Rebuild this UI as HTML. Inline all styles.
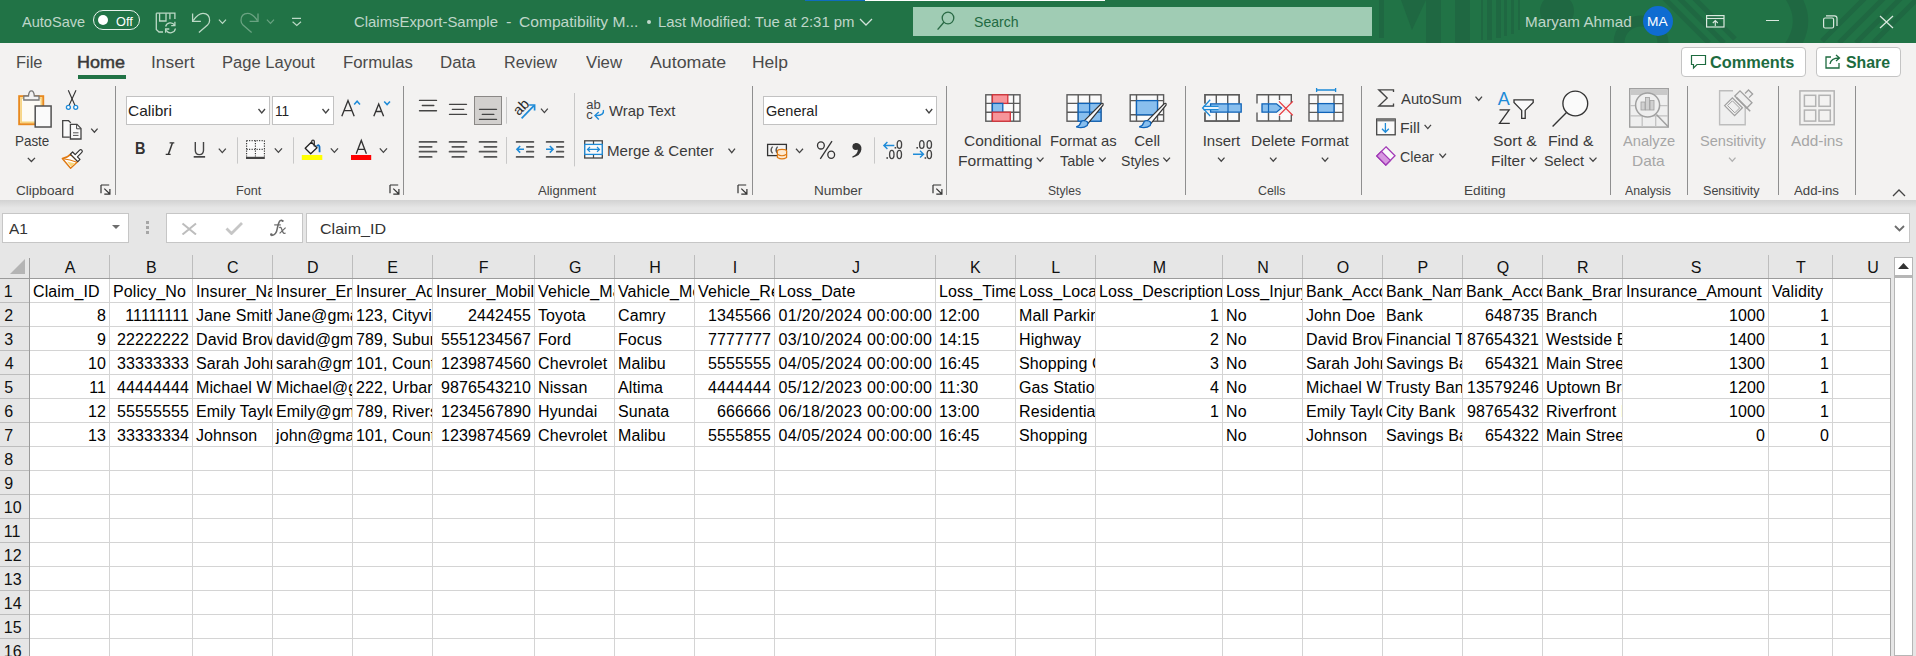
<!DOCTYPE html><html><head><meta charset="utf-8"><style>
html,body{margin:0;padding:0;}
body{width:1916px;height:656px;overflow:hidden;position:relative;background:#fff;font-family:"Liberation Sans",sans-serif;}
.t{position:absolute;white-space:pre;transform-origin:0 0;}
.c{position:absolute;height:23px;box-sizing:border-box;overflow:hidden;white-space:pre;font-size:16px;line-height:23px;color:#000;padding-top:1px;letter-spacing:0.1px}
</style></head><body>
<div style="position:absolute;left:0px;top:0px;width:1916px;height:43px;background:#217346"></div>
<div style="position:absolute;left:865px;top:0px;width:240px;height:1px;background:#fff"></div>
<svg style="position:absolute;left:1370px;top:0px;" width="546" height="43" viewBox="0 0 546 43"><g fill="#1f6842">
<rect x="9" y="0" width="5" height="38"/>
<path d="M31 0 H56 L42 30 Z"/>
<rect x="56" y="0" width="15" height="43"/>
<rect x="85" y="0" width="15" height="43"/>
<rect x="111" y="0" width="2" height="40"/><rect x="117" y="0" width="5" height="40"/><rect x="126" y="0" width="5" height="38"/><rect x="134" y="0" width="3" height="36"/><rect x="141" y="0" width="3" height="34"/><rect x="148" y="0" width="2" height="30"/>
<circle cx="187" cy="11" r="17"/>
</g>
<path d="M249 43 A 22 22 0 0 1 293 43" fill="none" stroke="#1f6842" stroke-width="11"/>
<g stroke="#1f6842" stroke-width="5">
<path d="M291 -5 L339 43 M306 -5 L354 43 M321 -5 L365 39"/>
<path d="M452 41 L497 -4 M469 43 L514 -2 M486 43 L531 -2 M503 43 L548 -2"/>
</g>
<path d="M418 -10 Q 443 21 418 52" fill="none" stroke="#1f6842" stroke-width="15"/>
</svg>
<div style="position:absolute;left:805px;top:0px;width:60px;height:1px;background:#0f6cbd"></div>
<div class="t" style="left:22.20px;top:13.5px;font-size:15px;line-height:15px;color:rgba(255,255,255,0.72);transform:scaleX(0.9713);">AutoSave</div>
<div style="position:absolute;left:93px;top:10px;width:45px;height:18px;border:1px solid #e8f1ec;border-radius:10px"></div>
<div style="position:absolute;left:98px;top:15px;width:10px;height:10px;border-radius:50%;background:#fff"></div>
<div class="t" style="left:116.03px;top:15px;font-size:13px;line-height:13px;color:#fff;transform:scaleX(0.9774);">Off</div>
<svg style="position:absolute;left:150px;top:8px;" width="160" height="30" viewBox="0 0 160 30"><path d="M6.3 5.2 H24.9 V11 M6.3 5.2 V21.5 L9 24 H13" fill="none" stroke="#bcd9c6" stroke-width="1.3"/>
<path d="M9.6 5.2 V13 H16 V5.2" fill="none" stroke="#bcd9c6" stroke-width="1.3"/><path d="M19.9 5.2 V11.3" stroke="#bcd9c6" stroke-width="1.3"/>
<path d="M15.6 18.5 A5 5 0 0 1 24.6 17.2 M25.4 20.5 A5 5 0 0 1 16.2 22.4" fill="none" stroke="#bcd9c6" stroke-width="1.3"/>
<path d="M24.9 13.8 V17.6 H21.2 M15.6 24.8 V21 H19.3" fill="none" stroke="#bcd9c6" stroke-width="1.3"/>
<path d="M42.6 5.4 V13.4 H50.9" fill="none" stroke="#bcd9c6" stroke-width="1.3"/>
<path d="M43.2 12.6 Q48 5.3 53 5.3 Q59.6 5.3 59.6 12.5 Q59.6 15 57.5 17 L48.9 24.6" fill="none" stroke="#bcd9c6" stroke-width="1.3"/>
<path d="M68.9 11.7 L72.5 15.4 L76 11.7" fill="none" stroke="#bcd9c6" stroke-width="1.2"/>
<path d="M108 5.4 V13.4 H99.6" fill="none" stroke="#6aa382" stroke-width="1.3"/>
<path d="M107.4 12.6 Q102.6 5.3 97.6 5.3 Q91 5.3 91 12.5 Q91 15 93 17 L101.6 24.6" fill="none" stroke="#6aa382" stroke-width="1.3"/>
<path d="M116.9 11.7 L120.5 15.4 L124 11.7" fill="none" stroke="#6aa382" stroke-width="1.2"/>
<path d="M142 10.4 H151 M142.6 13.8 L146.8 17.5 L151 13.8" fill="none" stroke="#bcd9c6" stroke-width="1.2"/>
</svg>
<div class="t" style="left:354.16px;top:13.899999999999999px;font-size:15px;line-height:15px;color:rgba(255,255,255,0.72);transform:scaleX(0.9922);">ClaimsExport-Sample</div>
<div class="t" style="left:505.97px;top:13.899999999999999px;font-size:15px;line-height:15px;color:rgba(255,255,255,0.72);transform:scaleX(1.0884);">-</div>
<div class="t" style="left:519.22px;top:13.899999999999999px;font-size:15px;line-height:15px;color:rgba(255,255,255,0.72);transform:scaleX(1.0383);">Compatibility M...</div>
<div style="position:absolute;left:647px;top:20px;width:4px;height:4px;border-radius:50%;background:rgba(255,255,255,0.72)"></div>
<div class="t" style="left:657.51px;top:13.899999999999999px;font-size:15px;line-height:15px;color:rgba(255,255,255,0.72);transform:scaleX(0.9946);">Last Modified: Tue at 2:31 pm</div>
<svg style="position:absolute;left:859px;top:18px;" width="14" height="8" viewBox="0 0 14 8"><path d="M1 1 L7 7 L13 1" fill="none" stroke="rgba(255,255,255,0.8)" stroke-width="1.3"/></svg>
<div style="position:absolute;left:913px;top:7px;width:459px;height:29px;background:#a0ccb4"></div>
<svg style="position:absolute;left:936px;top:10px;" width="20" height="22" viewBox="0 0 20 22"><circle cx="12" cy="8" r="5.8" fill="none" stroke="#2a6a45" stroke-width="1.3"/><path d="M7.9 12.3 L1.6 19.6" stroke="#2a6a45" stroke-width="1.4"/></svg>
<div class="t" style="left:973.87px;top:14.399999999999999px;font-size:15px;line-height:15px;color:#1f6a42;transform:scaleX(0.9384);">Search</div>
<div class="t" style="left:1525.38px;top:14px;font-size:15px;line-height:15px;color:rgba(255,255,255,0.72);transform:scaleX(1.0153);">Maryam Ahmad</div>
<div style="position:absolute;left:1643px;top:6px;width:30px;height:30px;border-radius:50%;background:#0f6cd1"></div>
<div class="t" style="left:1647.40px;top:15px;font-size:13px;line-height:13px;color:#fff;transform:scaleX(1.0563);">MA</div>
<svg style="position:absolute;left:1706px;top:15px;" width="19" height="13" viewBox="0 0 19 13"><rect x="0.6" y="0.6" width="17.4" height="11.4" fill="none" stroke="#d9e8de" stroke-width="1.2"/><path d="M0.6 3.5 H18" stroke="#d9e8de" stroke-width="1.1"/><path d="M9.3 11 V5.5 M6.8 8 L9.3 5.5 L11.8 8" fill="none" stroke="#d9e8de" stroke-width="1.1"/></svg>
<div style="position:absolute;left:1766px;top:20px;width:13px;height:1.3px;background:#d9e8de"></div>
<svg style="position:absolute;left:1823px;top:15px;" width="15" height="14" viewBox="0 0 15 14"><rect x="0.6" y="3" width="10" height="10" rx="1.5" fill="none" stroke="#d9e8de" stroke-width="1.2"/><path d="M3 0.8 H11.5 Q14 0.8 14 3.3 V11" fill="none" stroke="#d9e8de" stroke-width="1.2"/></svg>
<svg style="position:absolute;left:1879px;top:15px;" width="15" height="14" viewBox="0 0 15 14"><path d="M1 1 L14 13 M14 1 L1 13" stroke="#d9e8de" stroke-width="1.3"/></svg>
<div style="position:absolute;left:0px;top:43px;width:1916px;height:157px;background:#f3f2f1"></div>
<div class="t" style="left:16.09px;top:54.7px;font-size:16px;line-height:16px;color:#4a4a4a;transform:scaleX(1.0269);">File</div>
<div class="t" style="left:150.94px;top:54.7px;font-size:16px;line-height:16px;color:#4a4a4a;transform:scaleX(1.0863);">Insert</div>
<div class="t" style="left:222.18px;top:54.7px;font-size:16px;line-height:16px;color:#4a4a4a;transform:scaleX(1.0341);">Page Layout</div>
<div class="t" style="left:343.26px;top:54.7px;font-size:16px;line-height:16px;color:#4a4a4a;transform:scaleX(1.0481);">Formulas</div>
<div class="t" style="left:440.25px;top:54.7px;font-size:16px;line-height:16px;color:#4a4a4a;transform:scaleX(1.0530);">Data</div>
<div class="t" style="left:504.01px;top:54.7px;font-size:16px;line-height:16px;color:#4a4a4a;transform:scaleX(1.0078);">Review</div>
<div class="t" style="left:585.92px;top:54.7px;font-size:16px;line-height:16px;color:#4a4a4a;transform:scaleX(1.0490);">View</div>
<div class="t" style="left:650.20px;top:54.7px;font-size:16px;line-height:16px;color:#4a4a4a;transform:scaleX(1.1113);">Automate</div>
<div class="t" style="left:752.20px;top:54.7px;font-size:16px;line-height:16px;color:#4a4a4a;transform:scaleX(1.0917);">Help</div>
<div class="t" style="left:77.26px;top:54.7px;font-size:16px;line-height:16px;color:#3a3a3a;transform:scaleX(1.1245);-webkit-text-stroke:0.45px #3a3a3a;">Home</div>
<div style="position:absolute;left:78px;top:75px;width:48px;height:4px;background:#217346"></div>
<div style="position:absolute;left:1681px;top:47px;width:125px;height:30px;box-sizing:border-box;border:1px solid #c4c4c4;border-radius:4px;background:#fff"></div>
<div style="position:absolute;left:1816px;top:47px;width:85px;height:30px;box-sizing:border-box;border:1px solid #c4c4c4;border-radius:4px;background:#fff"></div>
<div class="t" style="left:1710.35px;top:55px;font-size:16px;line-height:16px;color:#1d6b3f;font-weight:bold;transform:scaleX(1.0202);">Comments</div>
<div class="t" style="left:1845.52px;top:55px;font-size:16px;line-height:16px;color:#1d6b3f;font-weight:bold;transform:scaleX(0.9899);">Share</div>
<svg style="position:absolute;left:1690px;top:54px;" width="17" height="16" viewBox="0 0 17 16"><path d="M1.5 1.5 H15.5 V10.5 H7 L3.5 14 V10.5 H1.5 Z" fill="none" stroke="#1d6b3f" stroke-width="1.2"/></svg>
<svg style="position:absolute;left:1824px;top:52px;" width="18" height="18" viewBox="0 0 18 18"><path d="M7 5 H2 V16 H15 V11" fill="none" stroke="#1d6b3f" stroke-width="1.3"/><path d="M6 12 Q7 6 15 6 M12 3 L15.5 6 L12 9" fill="none" stroke="#1d6b3f" stroke-width="1.3"/></svg>
<div style="position:absolute;left:115px;top:86px;width:1px;height:109px;background:#8f8f8f"></div>
<div style="position:absolute;left:403px;top:86px;width:1px;height:109px;background:#8f8f8f"></div>
<div style="position:absolute;left:752px;top:86px;width:1px;height:109px;background:#8f8f8f"></div>
<div style="position:absolute;left:946px;top:86px;width:1px;height:109px;background:#8f8f8f"></div>
<div style="position:absolute;left:1185px;top:86px;width:1px;height:109px;background:#8f8f8f"></div>
<div style="position:absolute;left:1361px;top:86px;width:1px;height:109px;background:#8f8f8f"></div>
<div style="position:absolute;left:1610px;top:86px;width:1px;height:109px;background:#8f8f8f"></div>
<div style="position:absolute;left:1687px;top:86px;width:1px;height:109px;background:#8f8f8f"></div>
<div style="position:absolute;left:1778px;top:86px;width:1px;height:109px;background:#8f8f8f"></div>
<div style="position:absolute;left:1855px;top:86px;width:1px;height:109px;background:#8f8f8f"></div>
<div class="t" style="left:15.82px;top:183.5px;font-size:13px;line-height:13px;color:#444;transform:scaleX(1.0435);">Clipboard</div>
<div class="t" style="left:235.59px;top:183.5px;font-size:13px;line-height:13px;color:#444;transform:scaleX(0.9721);">Font</div>
<div class="t" style="left:538.00px;top:183.5px;font-size:13px;line-height:13px;color:#444;transform:scaleX(1.0049);">Alignment</div>
<div class="t" style="left:814.41px;top:183.5px;font-size:13px;line-height:13px;color:#444;transform:scaleX(1.0449);">Number</div>
<div class="t" style="left:1048.46px;top:183.5px;font-size:13px;line-height:13px;color:#444;transform:scaleX(0.9306);">Styles</div>
<div class="t" style="left:1258.38px;top:183.5px;font-size:13px;line-height:13px;color:#444;transform:scaleX(0.9526);">Cells</div>
<div class="t" style="left:1463.91px;top:183.5px;font-size:13px;line-height:13px;color:#444;transform:scaleX(1.0468);">Editing</div>
<div class="t" style="left:1625.00px;top:183.5px;font-size:13px;line-height:13px;color:#444;transform:scaleX(0.9485);">Analysis</div>
<div class="t" style="left:1703.43px;top:183.5px;font-size:13px;line-height:13px;color:#444;transform:scaleX(0.9669);">Sensitivity</div>
<div class="t" style="left:1794.00px;top:183.5px;font-size:13px;line-height:13px;color:#444;transform:scaleX(1.0203);">Add-ins</div>
<svg style="position:absolute;left:100.2px;top:184.35px;" width="12" height="12" viewBox="0 0 12 12"><path d="M1 1 H9.2 M1 1 V9.25" stroke="#333" stroke-width="1.2"/><path d="M4.3 4.65 L9.9 10.05 M4.3 10.05 H9.9 V4.95" fill="none" stroke="#333" stroke-width="1.2"/></svg>
<svg style="position:absolute;left:388.5px;top:184.35px;" width="12" height="12" viewBox="0 0 12 12"><path d="M1 1 H9.2 M1 1 V9.25" stroke="#333" stroke-width="1.2"/><path d="M4.3 4.65 L9.9 10.05 M4.3 10.05 H9.9 V4.95" fill="none" stroke="#333" stroke-width="1.2"/></svg>
<svg style="position:absolute;left:737.1px;top:184.35px;" width="12" height="12" viewBox="0 0 12 12"><path d="M1 1 H9.2 M1 1 V9.25" stroke="#333" stroke-width="1.2"/><path d="M4.3 4.65 L9.9 10.05 M4.3 10.05 H9.9 V4.95" fill="none" stroke="#333" stroke-width="1.2"/></svg>
<svg style="position:absolute;left:931.5px;top:184.35px;" width="12" height="12" viewBox="0 0 12 12"><path d="M1 1 H9.2 M1 1 V9.25" stroke="#333" stroke-width="1.2"/><path d="M4.3 4.65 L9.9 10.05 M4.3 10.05 H9.9 V4.95" fill="none" stroke="#333" stroke-width="1.2"/></svg>
<svg style="position:absolute;left:1892px;top:188px;" width="14" height="9" viewBox="0 0 14 9"><path d="M1 8 L7 2 L13 8" fill="none" stroke="#444" stroke-width="1.3"/></svg>
<div style="position:absolute;left:0;top:200px;width:1916px;height:8px;background:linear-gradient(#d2d2d2,#e6e6e6)"></div>
<div style="position:absolute;left:0px;top:208px;width:1916px;height:48px;background:#e6e6e6"></div>
<div style="position:absolute;left:2px;top:213px;width:127px;height:30px;box-sizing:border-box;border:1px solid #c6c6c6;background:#fff"></div>
<div class="t" style="left:8.80px;top:220.8px;font-size:15px;line-height:15px;color:#333;transform:scaleX(1.0326);">A1</div>
<svg style="position:absolute;left:112px;top:225px;" width="9" height="5" viewBox="0 0 9 5"><path d="M0 0 H8 L4 4 Z" fill="#6d6d6d"/></svg>
<div style="position:absolute;left:146px;top:221px;width:3px;height:3px;background:#a6a6a6"></div>
<div style="position:absolute;left:146px;top:226px;width:3px;height:3px;background:#a6a6a6"></div>
<div style="position:absolute;left:146px;top:231px;width:3px;height:3px;background:#a6a6a6"></div>
<div style="position:absolute;left:166px;top:213px;width:137px;height:30px;box-sizing:border-box;border:1px solid #c6c6c6;background:#fff"></div>
<svg style="position:absolute;left:181px;top:222px;" width="16" height="13" viewBox="0 0 16 13"><path d="M1.5 1.5 L15 12.5 M15 1.5 L1.5 12.5" stroke="#bdbdbd" stroke-width="2"/></svg>
<svg style="position:absolute;left:225px;top:222px;" width="18" height="13" viewBox="0 0 18 13"><path d="M1.5 6.5 L6.5 11.5 L17 1" fill="none" stroke="#c6c6c6" stroke-width="2.8"/></svg>
<svg style="position:absolute;left:262px;top:212px;" width="34" height="32" viewBox="0 0 34 32"><g transform="translate(-262,-212)"><path d="M282.8 221.2 Q281.8 219.6 280.2 220.6 Q278.6 221.8 277.4 228 Q276.2 235.6 271.4 235.4" fill="none" stroke="#6a6a6a" stroke-width="1.6"/><circle cx="282.6" cy="221" r="1.1" fill="#6a6a6a"/><circle cx="271.3" cy="234.6" r="1.3" fill="#6a6a6a"/><path d="M274.2 224.9 H280.8" stroke="#6a6a6a" stroke-width="1.2"/><path d="M279.2 227.6 Q280.8 226.6 281.6 228.8 L283 232.4 Q283.8 234 285.6 233" fill="none" stroke="#6a6a6a" stroke-width="1.3"/><path d="M285.6 227.6 L279.6 233.4" stroke="#6a6a6a" stroke-width="1.2"/></g></svg>
<div style="position:absolute;left:306px;top:213px;width:1604px;height:30px;box-sizing:border-box;border:1px solid #c6c6c6;background:#fff"></div>
<div class="t" style="left:319.70px;top:220.8px;font-size:15px;line-height:15px;color:#333;transform:scaleX(1.0710);">Claim_ID</div>
<svg style="position:absolute;left:1894px;top:225px;" width="11" height="7" viewBox="0 0 11 7"><path d="M1 1 L5.5 5.5 L10 1" fill="none" stroke="#6d6d6d" stroke-width="1.8"/></svg>
<div style="position:absolute;left:0px;top:255px;width:1891px;height:23px;background:#e6e6e6"></div>
<div style="position:absolute;left:0px;top:279px;width:29px;height:377px;background:#e6e6e6"></div>
<div style="position:absolute;left:30px;top:279px;width:1860px;height:377px;background:#fff"></div>
<div style="position:absolute;left:109px;top:279px;width:1px;height:377px;background:#d4d4d4"></div>
<div style="position:absolute;left:109px;top:255px;width:1px;height:23px;background:#bdbdbd"></div>
<div style="position:absolute;left:192px;top:279px;width:1px;height:377px;background:#d4d4d4"></div>
<div style="position:absolute;left:192px;top:255px;width:1px;height:23px;background:#bdbdbd"></div>
<div style="position:absolute;left:272px;top:279px;width:1px;height:377px;background:#d4d4d4"></div>
<div style="position:absolute;left:272px;top:255px;width:1px;height:23px;background:#bdbdbd"></div>
<div style="position:absolute;left:352px;top:279px;width:1px;height:377px;background:#d4d4d4"></div>
<div style="position:absolute;left:352px;top:255px;width:1px;height:23px;background:#bdbdbd"></div>
<div style="position:absolute;left:432px;top:279px;width:1px;height:377px;background:#d4d4d4"></div>
<div style="position:absolute;left:432px;top:255px;width:1px;height:23px;background:#bdbdbd"></div>
<div style="position:absolute;left:534px;top:279px;width:1px;height:377px;background:#d4d4d4"></div>
<div style="position:absolute;left:534px;top:255px;width:1px;height:23px;background:#bdbdbd"></div>
<div style="position:absolute;left:614px;top:279px;width:1px;height:377px;background:#d4d4d4"></div>
<div style="position:absolute;left:614px;top:255px;width:1px;height:23px;background:#bdbdbd"></div>
<div style="position:absolute;left:694px;top:279px;width:1px;height:377px;background:#d4d4d4"></div>
<div style="position:absolute;left:694px;top:255px;width:1px;height:23px;background:#bdbdbd"></div>
<div style="position:absolute;left:774px;top:279px;width:1px;height:377px;background:#d4d4d4"></div>
<div style="position:absolute;left:774px;top:255px;width:1px;height:23px;background:#bdbdbd"></div>
<div style="position:absolute;left:935px;top:279px;width:1px;height:377px;background:#d4d4d4"></div>
<div style="position:absolute;left:935px;top:255px;width:1px;height:23px;background:#bdbdbd"></div>
<div style="position:absolute;left:1015px;top:279px;width:1px;height:377px;background:#d4d4d4"></div>
<div style="position:absolute;left:1015px;top:255px;width:1px;height:23px;background:#bdbdbd"></div>
<div style="position:absolute;left:1095px;top:279px;width:1px;height:377px;background:#d4d4d4"></div>
<div style="position:absolute;left:1095px;top:255px;width:1px;height:23px;background:#bdbdbd"></div>
<div style="position:absolute;left:1222px;top:279px;width:1px;height:377px;background:#d4d4d4"></div>
<div style="position:absolute;left:1222px;top:255px;width:1px;height:23px;background:#bdbdbd"></div>
<div style="position:absolute;left:1302px;top:279px;width:1px;height:377px;background:#d4d4d4"></div>
<div style="position:absolute;left:1302px;top:255px;width:1px;height:23px;background:#bdbdbd"></div>
<div style="position:absolute;left:1382px;top:279px;width:1px;height:377px;background:#d4d4d4"></div>
<div style="position:absolute;left:1382px;top:255px;width:1px;height:23px;background:#bdbdbd"></div>
<div style="position:absolute;left:1462px;top:279px;width:1px;height:377px;background:#d4d4d4"></div>
<div style="position:absolute;left:1462px;top:255px;width:1px;height:23px;background:#bdbdbd"></div>
<div style="position:absolute;left:1542px;top:279px;width:1px;height:377px;background:#d4d4d4"></div>
<div style="position:absolute;left:1542px;top:255px;width:1px;height:23px;background:#bdbdbd"></div>
<div style="position:absolute;left:1622px;top:279px;width:1px;height:377px;background:#d4d4d4"></div>
<div style="position:absolute;left:1622px;top:255px;width:1px;height:23px;background:#bdbdbd"></div>
<div style="position:absolute;left:1768px;top:279px;width:1px;height:377px;background:#d4d4d4"></div>
<div style="position:absolute;left:1768px;top:255px;width:1px;height:23px;background:#bdbdbd"></div>
<div style="position:absolute;left:1832px;top:279px;width:1px;height:377px;background:#d4d4d4"></div>
<div style="position:absolute;left:1832px;top:255px;width:1px;height:23px;background:#bdbdbd"></div>
<div style="position:absolute;left:1890px;top:279px;width:1px;height:377px;background:#a6a6a6"></div>
<div style="position:absolute;left:29px;top:258px;width:1px;height:398px;background:#9b9b9b"></div>
<div style="position:absolute;left:0px;top:278px;width:1891px;height:1px;background:#9b9b9b"></div>
<div style="position:absolute;left:30px;top:302px;width:1860px;height:1px;background:#d4d4d4"></div>
<div style="position:absolute;left:0px;top:302px;width:29px;height:1px;background:#bdbdbd"></div>
<div style="position:absolute;left:30px;top:326px;width:1860px;height:1px;background:#d4d4d4"></div>
<div style="position:absolute;left:0px;top:326px;width:29px;height:1px;background:#bdbdbd"></div>
<div style="position:absolute;left:30px;top:350px;width:1860px;height:1px;background:#d4d4d4"></div>
<div style="position:absolute;left:0px;top:350px;width:29px;height:1px;background:#bdbdbd"></div>
<div style="position:absolute;left:30px;top:374px;width:1860px;height:1px;background:#d4d4d4"></div>
<div style="position:absolute;left:0px;top:374px;width:29px;height:1px;background:#bdbdbd"></div>
<div style="position:absolute;left:30px;top:398px;width:1860px;height:1px;background:#d4d4d4"></div>
<div style="position:absolute;left:0px;top:398px;width:29px;height:1px;background:#bdbdbd"></div>
<div style="position:absolute;left:30px;top:422px;width:1860px;height:1px;background:#d4d4d4"></div>
<div style="position:absolute;left:0px;top:422px;width:29px;height:1px;background:#bdbdbd"></div>
<div style="position:absolute;left:30px;top:446px;width:1860px;height:1px;background:#d4d4d4"></div>
<div style="position:absolute;left:0px;top:446px;width:29px;height:1px;background:#bdbdbd"></div>
<div style="position:absolute;left:30px;top:470px;width:1860px;height:1px;background:#d4d4d4"></div>
<div style="position:absolute;left:0px;top:470px;width:29px;height:1px;background:#bdbdbd"></div>
<div style="position:absolute;left:30px;top:494px;width:1860px;height:1px;background:#d4d4d4"></div>
<div style="position:absolute;left:0px;top:494px;width:29px;height:1px;background:#bdbdbd"></div>
<div style="position:absolute;left:30px;top:518px;width:1860px;height:1px;background:#d4d4d4"></div>
<div style="position:absolute;left:0px;top:518px;width:29px;height:1px;background:#bdbdbd"></div>
<div style="position:absolute;left:30px;top:542px;width:1860px;height:1px;background:#d4d4d4"></div>
<div style="position:absolute;left:0px;top:542px;width:29px;height:1px;background:#bdbdbd"></div>
<div style="position:absolute;left:30px;top:566px;width:1860px;height:1px;background:#d4d4d4"></div>
<div style="position:absolute;left:0px;top:566px;width:29px;height:1px;background:#bdbdbd"></div>
<div style="position:absolute;left:30px;top:590px;width:1860px;height:1px;background:#d4d4d4"></div>
<div style="position:absolute;left:0px;top:590px;width:29px;height:1px;background:#bdbdbd"></div>
<div style="position:absolute;left:30px;top:614px;width:1860px;height:1px;background:#d4d4d4"></div>
<div style="position:absolute;left:0px;top:614px;width:29px;height:1px;background:#bdbdbd"></div>
<div style="position:absolute;left:30px;top:638px;width:1860px;height:1px;background:#d4d4d4"></div>
<div style="position:absolute;left:0px;top:638px;width:29px;height:1px;background:#bdbdbd"></div>
<div style="position:absolute;left:30px;top:662px;width:1860px;height:1px;background:#d4d4d4"></div>
<div style="position:absolute;left:0px;top:662px;width:29px;height:1px;background:#bdbdbd"></div>
<svg style="position:absolute;left:10px;top:259px;" width="16" height="16" viewBox="0 0 16 16"><path d="M15 0 V15 H0 Z" fill="#b4b4b4"/></svg>
<div class="t" style="left:64.68px;top:260px;font-size:16px;line-height:16px;color:#111;">A</div>
<div class="t" style="left:145.94px;top:260px;font-size:16px;line-height:16px;color:#111;">B</div>
<div class="t" style="left:227.12px;top:260px;font-size:16px;line-height:16px;color:#111;">C</div>
<div class="t" style="left:306.96px;top:260px;font-size:16px;line-height:16px;color:#111;">D</div>
<div class="t" style="left:387.36px;top:260px;font-size:16px;line-height:16px;color:#111;">E</div>
<div class="t" style="left:478.80px;top:260px;font-size:16px;line-height:16px;color:#111;">F</div>
<div class="t" style="left:568.96px;top:260px;font-size:16px;line-height:16px;color:#111;">G</div>
<div class="t" style="left:649.24px;top:260px;font-size:16px;line-height:16px;color:#111;">H</div>
<div class="t" style="left:732.80px;top:260px;font-size:16px;line-height:16px;color:#111;">I</div>
<div class="t" style="left:851.98px;top:260px;font-size:16px;line-height:16px;color:#111;">J</div>
<div class="t" style="left:970.12px;top:260px;font-size:16px;line-height:16px;color:#111;">K</div>
<div class="t" style="left:1051.16px;top:260px;font-size:16px;line-height:16px;color:#111;">L</div>
<div class="t" style="left:1152.86px;top:260px;font-size:16px;line-height:16px;color:#111;">M</div>
<div class="t" style="left:1257.24px;top:260px;font-size:16px;line-height:16px;color:#111;">N</div>
<div class="t" style="left:1336.80px;top:260px;font-size:16px;line-height:16px;color:#111;">O</div>
<div class="t" style="left:1417.44px;top:260px;font-size:16px;line-height:16px;color:#111;">P</div>
<div class="t" style="left:1496.80px;top:260px;font-size:16px;line-height:16px;color:#111;">Q</div>
<div class="t" style="left:1576.96px;top:260px;font-size:16px;line-height:16px;color:#111;">R</div>
<div class="t" style="left:1690.68px;top:260px;font-size:16px;line-height:16px;color:#111;">S</div>
<div class="t" style="left:1796.12px;top:260px;font-size:16px;line-height:16px;color:#111;">T</div>
<div class="t" style="left:1867.24px;top:260px;font-size:16px;line-height:16px;color:#111;">U</div>
<div class="t" style="left:3.80px;top:284px;font-size:16px;line-height:16px;color:#111;">1</div>
<div class="t" style="left:4.20px;top:308px;font-size:16px;line-height:16px;color:#111;">2</div>
<div class="t" style="left:4.36px;top:332px;font-size:16px;line-height:16px;color:#111;">3</div>
<div class="t" style="left:4.68px;top:356px;font-size:16px;line-height:16px;color:#111;">4</div>
<div class="t" style="left:4.36px;top:380px;font-size:16px;line-height:16px;color:#111;">5</div>
<div class="t" style="left:4.20px;top:404px;font-size:16px;line-height:16px;color:#111;">6</div>
<div class="t" style="left:4.20px;top:428px;font-size:16px;line-height:16px;color:#111;">7</div>
<div class="t" style="left:4.28px;top:452px;font-size:16px;line-height:16px;color:#111;">8</div>
<div class="t" style="left:4.28px;top:476px;font-size:16px;line-height:16px;color:#111;">9</div>
<div class="t" style="left:3.80px;top:500px;font-size:16px;line-height:16px;color:#111;">10</div>
<div class="t" style="left:3.80px;top:524px;font-size:16px;line-height:16px;color:#111;">11</div>
<div class="t" style="left:3.80px;top:548px;font-size:16px;line-height:16px;color:#111;">12</div>
<div class="t" style="left:3.80px;top:572px;font-size:16px;line-height:16px;color:#111;">13</div>
<div class="t" style="left:3.80px;top:596px;font-size:16px;line-height:16px;color:#111;">14</div>
<div class="t" style="left:3.80px;top:620px;font-size:16px;line-height:16px;color:#111;">15</div>
<div class="t" style="left:3.80px;top:644px;font-size:16px;line-height:16px;color:#111;">16</div>
<div style="position:absolute;left:1891px;top:255px;width:25px;height:401px;background:#e6e6e6"></div>
<div style="position:absolute;left:1894px;top:257px;width:19px;height:19px;box-sizing:border-box;border:1px solid #b6b6b6;background:#fff"></div>
<svg style="position:absolute;left:1898px;top:263px;" width="11" height="6" viewBox="0 0 11 6"><path d="M0 6 L5.5 0 L11 6 Z" fill="#333"/></svg>
<div style="position:absolute;left:1894px;top:276px;width:19px;height:380px;box-sizing:border-box;border:1px solid #b6b6b6;border-top:2px solid #b6b6b6;background:#fff"></div>
<div class="c" style="left:30px;top:279px;width:79px;padding-left:3px;">Claim_ID</div>
<div class="c" style="left:110px;top:279px;width:82px;padding-left:3px;">Policy_No</div>
<div class="c" style="left:193px;top:279px;width:79px;padding-left:3px;">Insurer_Name</div>
<div class="c" style="left:273px;top:279px;width:79px;padding-left:3px;">Insurer_Email</div>
<div class="c" style="left:353px;top:279px;width:79px;padding-left:3px;">Insurer_Address</div>
<div class="c" style="left:433px;top:279px;width:101px;padding-left:3px;">Insurer_Mobile</div>
<div class="c" style="left:535px;top:279px;width:79px;padding-left:3px;">Vehicle_Make</div>
<div class="c" style="left:615px;top:279px;width:79px;padding-left:3px;">Vahicle_Model</div>
<div class="c" style="left:695px;top:279px;width:79px;padding-left:3px;">Vehicle_Reg</div>
<div class="c" style="left:775px;top:279px;width:160px;padding-left:3px;">Loss_Date</div>
<div class="c" style="left:936px;top:279px;width:79px;padding-left:3px;">Loss_Time</div>
<div class="c" style="left:1016px;top:279px;width:79px;padding-left:3px;">Loss_Location</div>
<div class="c" style="left:1096px;top:279px;width:126px;padding-left:3px;">Loss_Description</div>
<div class="c" style="left:1223px;top:279px;width:79px;padding-left:3px;">Loss_Injury</div>
<div class="c" style="left:1303px;top:279px;width:79px;padding-left:3px;">Bank_Account_Name</div>
<div class="c" style="left:1383px;top:279px;width:79px;padding-left:3px;">Bank_Name</div>
<div class="c" style="left:1463px;top:279px;width:79px;padding-left:3px;">Bank_Account_No</div>
<div class="c" style="left:1543px;top:279px;width:79px;padding-left:3px;">Bank_Branch</div>
<div class="c" style="left:1623px;top:279px;width:145px;padding-left:3px;">Insurance_Amount</div>
<div class="c" style="left:1769px;top:279px;width:63px;padding-left:3px;">Validity</div>
<div class="c" style="left:30px;top:303px;width:79px;text-align:right;padding-right:3px;">8</div>
<div class="c" style="left:110px;top:303px;width:82px;text-align:right;padding-right:3px;">11111111</div>
<div class="c" style="left:193px;top:303px;width:79px;padding-left:3px;">Jane Smith</div>
<div class="c" style="left:273px;top:303px;width:79px;padding-left:3px;">Jane@gmail.com</div>
<div class="c" style="left:353px;top:303px;width:79px;padding-left:3px;">123, Cityview</div>
<div class="c" style="left:433px;top:303px;width:101px;text-align:right;padding-right:3px;">2442455</div>
<div class="c" style="left:535px;top:303px;width:79px;padding-left:3px;">Toyota</div>
<div class="c" style="left:615px;top:303px;width:79px;padding-left:3px;">Camry</div>
<div class="c" style="left:695px;top:303px;width:79px;text-align:right;padding-right:3px;">1345566</div>
<div class="c" style="left:775px;top:303px;width:160px;text-align:right;padding-right:2.6px;letter-spacing:0.38px;">01/20/2024 00:00:00</div>
<div class="c" style="left:936px;top:303px;width:79px;padding-left:3px;">12:00</div>
<div class="c" style="left:1016px;top:303px;width:79px;padding-left:3px;">Mall Parking</div>
<div class="c" style="left:1096px;top:303px;width:126px;text-align:right;padding-right:3px;">1</div>
<div class="c" style="left:1223px;top:303px;width:79px;padding-left:3px;">No</div>
<div class="c" style="left:1303px;top:303px;width:79px;padding-left:3px;">John Doe</div>
<div class="c" style="left:1383px;top:303px;width:79px;padding-left:3px;">Bank</div>
<div class="c" style="left:1463px;top:303px;width:79px;text-align:right;padding-right:3px;">648735</div>
<div class="c" style="left:1543px;top:303px;width:79px;padding-left:3px;">Branch</div>
<div class="c" style="left:1623px;top:303px;width:145px;text-align:right;padding-right:3px;">1000</div>
<div class="c" style="left:1769px;top:303px;width:63px;text-align:right;padding-right:3px;">1</div>
<div class="c" style="left:30px;top:327px;width:79px;text-align:right;padding-right:3px;">9</div>
<div class="c" style="left:110px;top:327px;width:82px;text-align:right;padding-right:3px;">22222222</div>
<div class="c" style="left:193px;top:327px;width:79px;padding-left:3px;">David Brown</div>
<div class="c" style="left:273px;top:327px;width:79px;padding-left:3px;">david@gmail.com</div>
<div class="c" style="left:353px;top:327px;width:79px;padding-left:3px;">789, Suburb</div>
<div class="c" style="left:433px;top:327px;width:101px;text-align:right;padding-right:3px;">5551234567</div>
<div class="c" style="left:535px;top:327px;width:79px;padding-left:3px;">Ford</div>
<div class="c" style="left:615px;top:327px;width:79px;padding-left:3px;">Focus</div>
<div class="c" style="left:695px;top:327px;width:79px;text-align:right;padding-right:3px;">7777777</div>
<div class="c" style="left:775px;top:327px;width:160px;text-align:right;padding-right:2.6px;letter-spacing:0.38px;">03/10/2024 00:00:00</div>
<div class="c" style="left:936px;top:327px;width:79px;padding-left:3px;">14:15</div>
<div class="c" style="left:1016px;top:327px;width:79px;padding-left:3px;">Highway</div>
<div class="c" style="left:1096px;top:327px;width:126px;text-align:right;padding-right:3px;">2</div>
<div class="c" style="left:1223px;top:327px;width:79px;padding-left:3px;">No</div>
<div class="c" style="left:1303px;top:327px;width:79px;padding-left:3px;">David Brown</div>
<div class="c" style="left:1383px;top:327px;width:79px;padding-left:3px;">Financial Trust</div>
<div class="c" style="left:1463px;top:327px;width:79px;text-align:right;padding-right:3px;">87654321</div>
<div class="c" style="left:1543px;top:327px;width:79px;padding-left:3px;">Westside Branch</div>
<div class="c" style="left:1623px;top:327px;width:145px;text-align:right;padding-right:3px;">1400</div>
<div class="c" style="left:1769px;top:327px;width:63px;text-align:right;padding-right:3px;">1</div>
<div class="c" style="left:30px;top:351px;width:79px;text-align:right;padding-right:3px;">10</div>
<div class="c" style="left:110px;top:351px;width:82px;text-align:right;padding-right:3px;">33333333</div>
<div class="c" style="left:193px;top:351px;width:79px;padding-left:3px;">Sarah Johnson</div>
<div class="c" style="left:273px;top:351px;width:79px;padding-left:3px;">sarah@gmail.com</div>
<div class="c" style="left:353px;top:351px;width:79px;padding-left:3px;">101, County</div>
<div class="c" style="left:433px;top:351px;width:101px;text-align:right;padding-right:3px;">1239874560</div>
<div class="c" style="left:535px;top:351px;width:79px;padding-left:3px;">Chevrolet</div>
<div class="c" style="left:615px;top:351px;width:79px;padding-left:3px;">Malibu</div>
<div class="c" style="left:695px;top:351px;width:79px;text-align:right;padding-right:3px;">5555555</div>
<div class="c" style="left:775px;top:351px;width:160px;text-align:right;padding-right:2.6px;letter-spacing:0.38px;">04/05/2024 00:00:00</div>
<div class="c" style="left:936px;top:351px;width:79px;padding-left:3px;">16:45</div>
<div class="c" style="left:1016px;top:351px;width:79px;padding-left:3px;">Shopping Center</div>
<div class="c" style="left:1096px;top:351px;width:126px;text-align:right;padding-right:3px;">3</div>
<div class="c" style="left:1223px;top:351px;width:79px;padding-left:3px;">No</div>
<div class="c" style="left:1303px;top:351px;width:79px;padding-left:3px;">Sarah Johnson</div>
<div class="c" style="left:1383px;top:351px;width:79px;padding-left:3px;">Savings Bank</div>
<div class="c" style="left:1463px;top:351px;width:79px;text-align:right;padding-right:3px;">654321</div>
<div class="c" style="left:1543px;top:351px;width:79px;padding-left:3px;">Main Street</div>
<div class="c" style="left:1623px;top:351px;width:145px;text-align:right;padding-right:3px;">1300</div>
<div class="c" style="left:1769px;top:351px;width:63px;text-align:right;padding-right:3px;">1</div>
<div class="c" style="left:30px;top:375px;width:79px;text-align:right;padding-right:3px;">11</div>
<div class="c" style="left:110px;top:375px;width:82px;text-align:right;padding-right:3px;">44444444</div>
<div class="c" style="left:193px;top:375px;width:79px;padding-left:3px;">Michael Wilson</div>
<div class="c" style="left:273px;top:375px;width:79px;padding-left:3px;">Michael@gmail.com</div>
<div class="c" style="left:353px;top:375px;width:79px;padding-left:3px;">222, Urban</div>
<div class="c" style="left:433px;top:375px;width:101px;text-align:right;padding-right:3px;">9876543210</div>
<div class="c" style="left:535px;top:375px;width:79px;padding-left:3px;">Nissan</div>
<div class="c" style="left:615px;top:375px;width:79px;padding-left:3px;">Altima</div>
<div class="c" style="left:695px;top:375px;width:79px;text-align:right;padding-right:3px;">4444444</div>
<div class="c" style="left:775px;top:375px;width:160px;text-align:right;padding-right:2.6px;letter-spacing:0.38px;">05/12/2023 00:00:00</div>
<div class="c" style="left:936px;top:375px;width:79px;padding-left:3px;">11:30</div>
<div class="c" style="left:1016px;top:375px;width:79px;padding-left:3px;">Gas Station</div>
<div class="c" style="left:1096px;top:375px;width:126px;text-align:right;padding-right:3px;">4</div>
<div class="c" style="left:1223px;top:375px;width:79px;padding-left:3px;">No</div>
<div class="c" style="left:1303px;top:375px;width:79px;padding-left:3px;">Michael Wilson</div>
<div class="c" style="left:1383px;top:375px;width:79px;padding-left:3px;">Trusty Bank</div>
<div class="c" style="left:1463px;top:375px;width:79px;text-align:right;padding-right:3px;">13579246</div>
<div class="c" style="left:1543px;top:375px;width:79px;padding-left:3px;">Uptown Branch</div>
<div class="c" style="left:1623px;top:375px;width:145px;text-align:right;padding-right:3px;">1200</div>
<div class="c" style="left:1769px;top:375px;width:63px;text-align:right;padding-right:3px;">1</div>
<div class="c" style="left:30px;top:399px;width:79px;text-align:right;padding-right:3px;">12</div>
<div class="c" style="left:110px;top:399px;width:82px;text-align:right;padding-right:3px;">55555555</div>
<div class="c" style="left:193px;top:399px;width:79px;padding-left:3px;">Emily Taylor</div>
<div class="c" style="left:273px;top:399px;width:79px;padding-left:3px;">Emily@gmail.com</div>
<div class="c" style="left:353px;top:399px;width:79px;padding-left:3px;">789, Riverside</div>
<div class="c" style="left:433px;top:399px;width:101px;text-align:right;padding-right:3px;">1234567890</div>
<div class="c" style="left:535px;top:399px;width:79px;padding-left:3px;">Hyundai</div>
<div class="c" style="left:615px;top:399px;width:79px;padding-left:3px;">Sunata</div>
<div class="c" style="left:695px;top:399px;width:79px;text-align:right;padding-right:3px;">666666</div>
<div class="c" style="left:775px;top:399px;width:160px;text-align:right;padding-right:2.6px;letter-spacing:0.38px;">06/18/2023 00:00:00</div>
<div class="c" style="left:936px;top:399px;width:79px;padding-left:3px;">13:00</div>
<div class="c" style="left:1016px;top:399px;width:79px;padding-left:3px;">Residential</div>
<div class="c" style="left:1096px;top:399px;width:126px;text-align:right;padding-right:3px;">1</div>
<div class="c" style="left:1223px;top:399px;width:79px;padding-left:3px;">No</div>
<div class="c" style="left:1303px;top:399px;width:79px;padding-left:3px;">Emily Taylor</div>
<div class="c" style="left:1383px;top:399px;width:79px;padding-left:3px;">City Bank</div>
<div class="c" style="left:1463px;top:399px;width:79px;text-align:right;padding-right:3px;">98765432</div>
<div class="c" style="left:1543px;top:399px;width:79px;padding-left:3px;">Riverfront Branch</div>
<div class="c" style="left:1623px;top:399px;width:145px;text-align:right;padding-right:3px;">1000</div>
<div class="c" style="left:1769px;top:399px;width:63px;text-align:right;padding-right:3px;">1</div>
<div class="c" style="left:30px;top:423px;width:79px;text-align:right;padding-right:3px;">13</div>
<div class="c" style="left:110px;top:423px;width:82px;text-align:right;padding-right:3px;">33333334</div>
<div class="c" style="left:193px;top:423px;width:79px;padding-left:3px;">Johnson</div>
<div class="c" style="left:273px;top:423px;width:79px;padding-left:3px;">john@gmail.com</div>
<div class="c" style="left:353px;top:423px;width:79px;padding-left:3px;">101, County</div>
<div class="c" style="left:433px;top:423px;width:101px;text-align:right;padding-right:3px;">1239874569</div>
<div class="c" style="left:535px;top:423px;width:79px;padding-left:3px;">Chevrolet</div>
<div class="c" style="left:615px;top:423px;width:79px;padding-left:3px;">Malibu</div>
<div class="c" style="left:695px;top:423px;width:79px;text-align:right;padding-right:3px;">5555855</div>
<div class="c" style="left:775px;top:423px;width:160px;text-align:right;padding-right:2.6px;letter-spacing:0.38px;">04/05/2024 00:00:00</div>
<div class="c" style="left:936px;top:423px;width:79px;padding-left:3px;">16:45</div>
<div class="c" style="left:1016px;top:423px;width:79px;padding-left:3px;">Shopping</div>
<div class="c" style="left:1223px;top:423px;width:79px;padding-left:3px;">No</div>
<div class="c" style="left:1303px;top:423px;width:79px;padding-left:3px;">Johnson</div>
<div class="c" style="left:1383px;top:423px;width:79px;padding-left:3px;">Savings Bank</div>
<div class="c" style="left:1463px;top:423px;width:79px;text-align:right;padding-right:3px;">654322</div>
<div class="c" style="left:1543px;top:423px;width:79px;padding-left:3px;">Main Street</div>
<div class="c" style="left:1623px;top:423px;width:145px;text-align:right;padding-right:3px;">0</div>
<div class="c" style="left:1769px;top:423px;width:63px;text-align:right;padding-right:3px;">0</div>
<div class="t" style="left:513px;top:99.5px;font-size:14.5px;line-height:14.5px;color:#2a2a2a;transform:rotate(-45deg);transform-origin:50% 50%">ab</div>
<div class="t" style="left:586.2px;top:98px;font-size:13px;line-height:13px;color:#444">ab</div>
<div class="t" style="left:586.2px;top:107.5px;font-size:13px;line-height:13px;color:#444">c</div>
<div class="t" style="left:1497.8px;top:90px;font-size:18px;line-height:18px;color:#1e8bd8">A</div>
<svg style="position:absolute;left:0;top:0" width="1916" height="200" viewBox="0 0 1916 200"><rect x="19.2" y="96.2" width="24" height="28" fill="#fdfbf5" stroke="#e8891f" stroke-width="2"/><rect x="21.1" y="98.1" width="20.2" height="24.2" fill="none" stroke="#f7d27a" stroke-width="1.6"/><path d="M23.8 100 V96 H28.5 Q28.8 90.8 31.4 90.8 Q34 90.8 34.3 96 H39 V100 Z" fill="#f2f2f2" stroke="#777" stroke-width="1.3"/><rect x="35.2" y="106" width="15.9" height="21" fill="#fafafa" stroke="#505050" stroke-width="1.5"/><path d="M68.3 90.3 L75 105.5" stroke="#333" stroke-width="1.1" stroke-linecap="butt" fill="none"/><path d="M76 90.3 L69 105.5" stroke="#333" stroke-width="1.1" stroke-linecap="butt" fill="none"/><circle cx="68.4" cy="107.3" r="2" fill="#fff" stroke="#1e8bd8" stroke-width="1.3"/><circle cx="75.7" cy="107.3" r="2" fill="#fff" stroke="#1e8bd8" stroke-width="1.3"/><path d="M69.8 137.2 H62.7 V120.7 H68.6 L70.8 122.9" fill="#fafafa" stroke="#444" stroke-width="1.3"/><path d="M70.4 124.4 H77 L81 128.4 V139 H70.4 Z" fill="#fafafa" stroke="#444" stroke-width="1.3"/><path d="M76.6 124.4 V128.8 H81" fill="none" stroke="#444" stroke-width="1"/><path d="M73 132.8 L78.5 132.8" stroke="#555" stroke-width="1" stroke-linecap="butt" fill="none"/><path d="M73 135.4 L78.5 135.4" stroke="#555" stroke-width="1" stroke-linecap="butt" fill="none"/><path d="M91.2 128.6 L94.4 132.2 L97.6 128.6" fill="none" stroke="#444" stroke-width="1.3"/><path d="M62.3 158.5 Q67.5 157.6 70.4 154.2 L77.8 161.6 L70.6 168.3 Z" fill="#fff" stroke="#e07a12" stroke-width="1.4" stroke-linejoin="round"/><path d="M67 161.6 L75.4 163.4 L70.8 166.6 Z" fill="#fbd77b"/><path d="M63 158.8 Q70 159.4 77 162.2" fill="none" stroke="#e07a12" stroke-width="1.1"/><path d="M70.4 154.2 L72.6 152.0 L75.2 154.6 L79.6 150.2 Q80.7 149.1 81.8 150.2 Q82.9 151.3 81.8 152.4 L77.4 156.8 L80.0 159.4 L77.8 161.6 Z" fill="#fff" stroke="#333" stroke-width="1.2" stroke-linejoin="round"/><path d="M27.8 157.9 L31.4 161.5 L35 157.9" fill="none" stroke="#444" stroke-width="1.3"/><rect x="126.5" y="96.5" width="143" height="28" fill="#fff" stroke="#c2c2c2" stroke-width="1"/><rect x="272.5" y="96.5" width="61" height="28" fill="#fff" stroke="#c2c2c2" stroke-width="1"/><path d="M258.5 109 L261.75 113 L265 109" fill="none" stroke="#444" stroke-width="1.3"/><path d="M322.5 109 L325.75 113 L329 109" fill="none" stroke="#444" stroke-width="1.3"/><path d="M341.8 116.2 L348 100.6 L354.2 116.2 M344 110.6 H352" fill="none" stroke="#333" stroke-width="1.35"/><path d="M354.2 104.4 L357.1 101.2 L360 104.4" fill="none" stroke="#1e8bd8" stroke-width="1.5"/><path d="M373.8 116.2 L378.7 104 L383.6 116.2 M375.6 111.5 H381.8" fill="none" stroke="#333" stroke-width="1.35"/><path d="M384.2 101.4 L387.1 104.6 L390 101.4" fill="none" stroke="#1e8bd8" stroke-width="1.5"/><rect x="193.7" y="156" width="11.4" height="1.7" fill="#444"/><path d="M195.3 142 V150.2 Q195.3 154.6 199.4 154.6 Q203.5 154.6 203.5 150.2 V142" fill="none" stroke="#444" stroke-width="1.4"/><path d="M218.8 148.6 L222.3 152.6 L225.8 148.6" fill="none" stroke="#444" stroke-width="1.3"/><path d="M237.5 137.3 L237.5 163.6" stroke="#c8c8c8" stroke-width="1" stroke-linecap="butt" fill="none"/><path d="M293.5 137.3 L293.5 163.6" stroke="#c8c8c8" stroke-width="1" stroke-linecap="butt" fill="none"/><rect x="246.8" y="140.8" width="17.4" height="16" fill="#fafafa"/><path d="M246.6 140.6 H264.4 M246.6 140.6 V156.5 M264.4 140.6 V156.5 M255.4 140.6 V156.5 M246.6 149.4 H264.4" fill="none" stroke="#333" stroke-width="1.1" stroke-dasharray="1.1 1.4"/><rect x="246" y="156.8" width="18.8" height="2.2" fill="#444"/><path d="M274.8 148.4 L278.4 152.4 L282 148.4" fill="none" stroke="#444" stroke-width="1.3"/><path d="M305.2 148.3 L311.3 142.3 L317 147.7 L310.7 153.8 Z" fill="#fafafa" stroke="#222" stroke-width="1.3" stroke-linejoin="round"/><path d="M311.7 142.5 V141.5 Q311.7 140.1 313 140.1 Q314.3 140.1 314.3 141.5 V146.6" fill="none" stroke="#333" stroke-width="1.3"/><path d="M316.8 146.2 Q318.6 143.6 319.5 146.8 L319.6 152.3" fill="none" stroke="#0f6cbd" stroke-width="1.8"/><rect x="301.8" y="155" width="20.5" height="5" fill="#ffff00"/><path d="M330.8 148.4 L334.4 152.4 L338 148.4" fill="none" stroke="#444" stroke-width="1.3"/><path d="M356.2 153.8 L361.3 140.5 L366.4 153.8 M358 149.3 H364.6" fill="none" stroke="#333" stroke-width="1.35"/><rect x="351" y="155" width="20.2" height="5" fill="#ff0000"/><path d="M379.8 148.4 L383.4 152.4 L387 148.4" fill="none" stroke="#444" stroke-width="1.3"/><path d="M419.5 100.4 H436.5" stroke="#444" stroke-width="1.35" stroke-linecap="round"/><path d="M422.3 105.5 H433.8" stroke="#444" stroke-width="1.35" stroke-linecap="round"/><path d="M419.5 110.7 H436.5" stroke="#444" stroke-width="1.35" stroke-linecap="round"/><path d="M449.5 104.3 H466.5" stroke="#444" stroke-width="1.35" stroke-linecap="round"/><path d="M452.3 109.3 H463.8" stroke="#444" stroke-width="1.35" stroke-linecap="round"/><path d="M449.5 114.4 H466.5" stroke="#444" stroke-width="1.35" stroke-linecap="round"/><rect x="474.5" y="96.5" width="27" height="28" fill="#d2d0ce" stroke="#8a8886" stroke-width="1"/><path d="M479.5 109.3 H496.5" stroke="#444" stroke-width="1.35" stroke-linecap="round"/><path d="M482.3 114.4 H493.8" stroke="#444" stroke-width="1.35" stroke-linecap="round"/><path d="M479.5 119.4 H496.5" stroke="#444" stroke-width="1.35" stroke-linecap="round"/><path d="M506.5 97 L506.5 123.7" stroke="#c8c8c8" stroke-width="1" stroke-linecap="butt" fill="none"/><path d="M521.6 118.4 L534 105.6" stroke="#1e8bd8" stroke-width="1.7"/><path d="M529.2 105 H534.6 V110.4" fill="none" stroke="#1e8bd8" stroke-width="1.7"/><path d="M541 108.6 L544.4 112.6 L547.8 108.6" fill="none" stroke="#444" stroke-width="1.3"/><path d="M574.5 93 L574.5 166.4" stroke="#c8c8c8" stroke-width="1" stroke-linecap="butt" fill="none"/><path d="M603.4 110 Q604.5 115.5 596 115.6" fill="none" stroke="#1e8bd8" stroke-width="1.4"/><path d="M598.8 112 L595 115.6 L598.8 119.4" fill="none" stroke="#1e8bd8" stroke-width="1.4"/><path d="M419.5 141.9 H436.5" stroke="#555" stroke-width="1.7" stroke-linecap="round"/><path d="M419.5 146.8 H431.7" stroke="#555" stroke-width="1.7" stroke-linecap="round"/><path d="M419.5 151.7 H436.5" stroke="#555" stroke-width="1.7" stroke-linecap="round"/><path d="M419.5 156.9 H431.7" stroke="#555" stroke-width="1.7" stroke-linecap="round"/><path d="M449.5 141.9 H466.5" stroke="#555" stroke-width="1.7" stroke-linecap="round"/><path d="M452.3 146.8 H463.8" stroke="#555" stroke-width="1.7" stroke-linecap="round"/><path d="M449.5 151.7 H466.5" stroke="#555" stroke-width="1.7" stroke-linecap="round"/><path d="M452.3 156.9 H463.8" stroke="#555" stroke-width="1.7" stroke-linecap="round"/><path d="M479.5 141.9 H496.5" stroke="#555" stroke-width="1.7" stroke-linecap="round"/><path d="M484.4 146.8 H496.5" stroke="#555" stroke-width="1.7" stroke-linecap="round"/><path d="M479.5 151.7 H496.5" stroke="#555" stroke-width="1.7" stroke-linecap="round"/><path d="M484.4 156.9 H496.5" stroke="#555" stroke-width="1.7" stroke-linecap="round"/><path d="M506.5 137 L506.5 163.8" stroke="#c8c8c8" stroke-width="1" stroke-linecap="butt" fill="none"/><path d="M516.6 141.9 H533.4" stroke="#555" stroke-width="1.7" stroke-linecap="round"/><path d="M526.8 146.8 H533.4" stroke="#555" stroke-width="1.7" stroke-linecap="round"/><path d="M526.8 151.7 H533.4" stroke="#555" stroke-width="1.7" stroke-linecap="round"/><path d="M516.6 156.9 H533.4" stroke="#555" stroke-width="1.7" stroke-linecap="round"/><path d="M524 149.3 H517.2 M520.2 146 L516.9 149.3 L520.2 152.6" fill="none" stroke="#1e8bd8" stroke-width="1.5"/><path d="M546.6 141.9 H563.4" stroke="#555" stroke-width="1.7" stroke-linecap="round"/><path d="M556.8 146.8 H563.4" stroke="#555" stroke-width="1.7" stroke-linecap="round"/><path d="M556.8 151.7 H563.4" stroke="#555" stroke-width="1.7" stroke-linecap="round"/><path d="M546.6 156.9 H563.4" stroke="#555" stroke-width="1.7" stroke-linecap="round"/><path d="M546 149.3 H552.8 M549.8 146 L553.1 149.3 L549.8 152.6" fill="none" stroke="#1e8bd8" stroke-width="1.5"/><rect x="584.7" y="140.8" width="17.6" height="17.2" fill="#fafafa" stroke="#444" stroke-width="1.3"/><path d="M593.5 141 L593.5 158" stroke="#444" stroke-width="1.2" stroke-linecap="butt" fill="none"/><rect x="584.8" y="144.4" width="17.4" height="10" fill="#fafafa" stroke="#1e8bd8" stroke-width="1.3"/><path d="M587.5 149.4 H599.5 M590 147 L587.5 149.4 L590 151.8 M597 147 L599.5 149.4 L597 151.8" fill="none" stroke="#1e8bd8" stroke-width="1.2"/><path d="M728.5 148.6 L731.75 152.6 L735 148.6" fill="none" stroke="#444" stroke-width="1.3"/><rect x="763.5" y="96.5" width="173" height="28" fill="#fff" stroke="#c2c2c2" stroke-width="1"/><path d="M925.8 109 L929.0 113 L932.2 109" fill="none" stroke="#444" stroke-width="1.3"/><rect x="767.6" y="144.4" width="18.8" height="11.2" fill="#f4f4f4" stroke="#333" stroke-width="1.3"/><path d="M772.6 146.6 Q769.6 150 772.6 153.4 M777.6 146.6 Q774.6 150 777.6 153.4" fill="none" stroke="#555" stroke-width="1.4"/><ellipse cx="782" cy="151.2" rx="4.6" ry="1.8" fill="#fde9d0" stroke="#e07a12" stroke-width="1.2"/><path d="M777.4 151.2 V157.4 Q782 160.4 786.6 157.4 V151.2 M777.4 154.3 Q782 157.2 786.6 154.3" fill="#fde9d0" stroke="#e07a12" stroke-width="1.2"/><path d="M796 148.8 L799.5 152.6 L803 148.8" fill="none" stroke="#444" stroke-width="1.3"/><ellipse cx="820.9" cy="145.4" rx="3.4" ry="3.6" fill="none" stroke="#333" stroke-width="1.3"/><ellipse cx="831.2" cy="154.7" rx="3.4" ry="3.6" fill="none" stroke="#333" stroke-width="1.3"/><path d="M832 141.2 L820.3 158.8" stroke="#333" stroke-width="1.3"/><path d="M855 143 Q861.8 142.6 861.4 149.6 Q860.8 155.6 852.6 157.8 L852.3 156.6 Q857.6 154 857.8 150.2 Z" fill="#333"/><circle cx="855.8" cy="146.6" r="3.4" fill="#333"/><path d="M874.5 137.3 L874.5 163.6" stroke="#c8c8c8" stroke-width="1" stroke-linecap="butt" fill="none"/><path d="M894.3 145.5 H884 M887.4 142.1 L883.9 145.5 L887.4 148.9" fill="none" stroke="#1e8bd8" stroke-width="1.4"/><ellipse cx="899.4" cy="144.5" rx="2.2" ry="3.9" fill="none" stroke="#444" stroke-width="1.35"/><rect x="894.6" y="147" width="1.6" height="1.6" fill="#444"/><rect x="886.4" y="157.2" width="1.6" height="1.6" fill="#444"/><ellipse cx="891.8" cy="154.5" rx="2.2" ry="4.1" fill="none" stroke="#444" stroke-width="1.35"/><ellipse cx="899.3" cy="154.5" rx="2.2" ry="4.1" fill="none" stroke="#444" stroke-width="1.35"/><rect x="916.4" y="147" width="1.6" height="1.6" fill="#444"/><ellipse cx="921.8" cy="144.5" rx="2.2" ry="3.9" fill="none" stroke="#444" stroke-width="1.35"/><ellipse cx="929.3" cy="144.5" rx="2.2" ry="3.9" fill="none" stroke="#444" stroke-width="1.35"/><ellipse cx="929.3" cy="154.5" rx="2.2" ry="4.1" fill="none" stroke="#444" stroke-width="1.35"/><rect x="924.6" y="157.2" width="1.6" height="1.6" fill="#444"/><path d="M913 154.2 H923.5 M920 150.8 L923.5 154.2 L920 157.6" fill="none" stroke="#1e8bd8" stroke-width="1.4"/><rect x="985.8" y="94.8" width="34.200000000000045" height="26.400000000000006" fill="#fafafa" stroke="#5a5a5a" stroke-width="1.4"/><path d="M992.2 94.8 V121.2" stroke="#5a5a5a" stroke-width="1.4"/><path d="M1013.6 94.8 V121.2" stroke="#5a5a5a" stroke-width="1.4"/><path d="M985.8 103.4 H1020" stroke="#5a5a5a" stroke-width="1.4"/><path d="M985.8 112.2 H1020" stroke="#5a5a5a" stroke-width="1.4"/><rect x="992.4" y="94.8" width="15.4" height="8.6" fill="#f7959a" stroke="#d6333a" stroke-width="1.3"/><rect x="992.4" y="103.4" width="10.4" height="8.8" fill="#89bfee" stroke="#0f63b8" stroke-width="1.3"/><rect x="992.4" y="112.2" width="17.9" height="9" fill="#f7959a" stroke="#d6333a" stroke-width="1.3"/><rect x="1067" y="94.8" width="34" height="26.400000000000006" fill="#fafafa" stroke="#5a5a5a" stroke-width="1.4"/><path d="M1078.2 94.8 V121.2" stroke="#5a5a5a" stroke-width="1.4"/><path d="M1089.6 94.8 V121.2" stroke="#5a5a5a" stroke-width="1.4"/><path d="M1067 103.4 H1101" stroke="#5a5a5a" stroke-width="1.4"/><path d="M1067 112.2 H1101" stroke="#5a5a5a" stroke-width="1.4"/><rect x="1078.2" y="103.4" width="22.8" height="17.8" fill="#89bfee" stroke="#0f63b8" stroke-width="1.3"/><path d="M1089.6 103.4 V121.2 M1078.2 112.2 H1101" stroke="#0f63b8" stroke-width="1.3"/><path d="M1083.7 121.4 L1101.2 103.8 Q1103.8 102.2 1103.0 105.2 L1087.0 124.7 Z" fill="#fafafa" stroke="#333" stroke-width="1.2"/><path d="M1083.2 120.7 Q1089.7 121.0 1087.2 125.4 Q1083.2 129.0 1076.2 127.0 Q1079.7 126.2 1080.4 123.2 Q1081.2 120.6 1083.2 120.7 Z" fill="#89bfee" stroke="#0f63b8" stroke-width="1.3"/><rect x="1130.2" y="94.8" width="33.399999999999864" height="26.400000000000006" fill="#fafafa" stroke="#5a5a5a" stroke-width="1.4"/><path d="M1136.5 94.8 V121.2" stroke="#5a5a5a" stroke-width="1.4"/><path d="M1157.5 94.8 V121.2" stroke="#5a5a5a" stroke-width="1.4"/><path d="M1130.2 100.6 H1163.6" stroke="#5a5a5a" stroke-width="1.4"/><path d="M1130.2 114.8 H1163.6" stroke="#5a5a5a" stroke-width="1.4"/><rect x="1136.5" y="100.6" width="21" height="14.2" fill="#89bfee" stroke="#0f63b8" stroke-width="1.3"/><path d="M1146.7 121.4 L1164.2 103.8 Q1166.8 102.2 1166.0 105.2 L1150.0 124.7 Z" fill="#fafafa" stroke="#333" stroke-width="1.2"/><path d="M1146.2 120.7 Q1152.7 121.0 1150.2 125.4 Q1146.2 129.0 1139.2 127.0 Q1142.7 126.2 1143.4 123.2 Q1144.2 120.6 1146.2 120.7 Z" fill="#89bfee" stroke="#0f63b8" stroke-width="1.3"/><path d="M1036.8 157.6 L1040.15 161.2 L1043.5 157.6" fill="none" stroke="#444" stroke-width="1.3"/><path d="M1099 157.6 L1102.35 161.2 L1105.7 157.6" fill="none" stroke="#444" stroke-width="1.3"/><path d="M1163.3 157.6 L1166.65 161.2 L1170 157.6" fill="none" stroke="#444" stroke-width="1.3"/><path d="M1205 103.4 V94.8 H1239.1 V103.4 M1205 112.6 V121 H1239.1 V112.6 M1216.3 94.8 V103.4 M1227.7 94.8 V103.4 M1216.3 112.6 V121 M1227.7 112.6 V121" fill="none" stroke="#5a5a5a" stroke-width="1.4"/><rect x="1205.7" y="95.5" width="32.7" height="7.6" fill="#fafafa"/><rect x="1205.7" y="113" width="32.7" height="7.4" fill="#fafafa"/><path d="M1205 103.4 V94.8 H1239.1 V103.4 M1205 112.6 V121 H1239.1 V112.6 M1216.3 94.8 V103.4 M1227.7 94.8 V103.4 M1216.3 112.6 V121 M1227.7 112.6 V121" fill="none" stroke="#5a5a5a" stroke-width="1.4"/><path d="M1210.6 103.8 H1241.2 V112.2 H1210.6 Z" fill="#89bfee" stroke="#0f63b8" stroke-width="1.3"/><path d="M1228 103.8 V112.2" stroke="#0f63b8" stroke-width="1.2"/><path d="M1203.5 106.4 H1218.5 M1203.5 109.6 H1218.5" fill="none" stroke="#1e8bd8" stroke-width="1.2"/><path d="M1204 108 H1218.5" fill="none" stroke="#e8f2fb" stroke-width="2"/><path d="M1210.2 99.8 L1202.6 108 L1210.2 116" fill="none" stroke="#1e8bd8" stroke-width="1.3"/><rect x="1257" y="95.5" width="34.3" height="7.6" fill="#fafafa"/><rect x="1257" y="113" width="34.3" height="7.4" fill="#fafafa"/><path d="M1257 103.4 V94.8 H1291.3 V103 M1257 112.6 V121 H1291.3 V114.5 M1268.5 94.8 V103.4 M1279.5 94.8 V100 M1268.5 112.6 V121 M1279.5 116 V121" fill="none" stroke="#5a5a5a" stroke-width="1.4"/><path d="M1262 103.8 H1276.5 L1281.5 108 L1276.5 112.2 H1262 Z" fill="#89bfee" stroke="#0f63b8" stroke-width="1.3"/><path d="M1268.5 103.8 V112.2" stroke="#0f63b8" stroke-width="1.2"/><path d="M1279 101.4 L1292.8 115.4 M1292.8 101.4 L1279 115.4" stroke="#e8353b" stroke-width="1.3"/><rect x="1309" y="94.8" width="34" height="26.200000000000003" fill="#fafafa" stroke="#5a5a5a" stroke-width="1.4"/><path d="M1318 94.8 V121" stroke="#5a5a5a" stroke-width="1.4"/><path d="M1334 94.8 V121" stroke="#5a5a5a" stroke-width="1.4"/><path d="M1309 103.6 H1343" stroke="#5a5a5a" stroke-width="1.4"/><path d="M1309 112.4 H1343" stroke="#5a5a5a" stroke-width="1.4"/><rect x="1318" y="103.6" width="16" height="8.8" fill="#89bfee" stroke="#0f63b8" stroke-width="1.3"/><path d="M1316.6 90 H1335.6 M1316.6 88 V92 M1335.6 88 V92" fill="none" stroke="#1e8bd8" stroke-width="1.3"/><path d="M1218 157.6 L1221.25 161.2 L1224.5 157.6" fill="none" stroke="#444" stroke-width="1.3"/><path d="M1270 157.6 L1273.25 161.2 L1276.5 157.6" fill="none" stroke="#444" stroke-width="1.3"/><path d="M1321.8 157.6 L1325.05 161.2 L1328.3 157.6" fill="none" stroke="#444" stroke-width="1.3"/><path d="M1393.5 92 V89.8 H1378.8 L1387.2 98 L1378.8 106 H1393.5 V103.6" fill="none" stroke="#444" stroke-width="1.35"/><path d="M1475.5 96.6 L1478.75 100.4 L1482 96.6" fill="none" stroke="#444" stroke-width="1.3"/><rect x="1376.7" y="119" width="18.5" height="15.8" fill="#fafafa" stroke="#444" stroke-width="1.3"/><rect x="1377" y="119" width="18" height="2.4" fill="#777"/><path d="M1385.4 123 V132.2 M1382 128.8 L1385.4 132.3 L1388.8 128.8" fill="none" stroke="#1e8bd8" stroke-width="1.3"/><path d="M1424.6 124.8 L1427.8 128.6 L1431 124.8" fill="none" stroke="#444" stroke-width="1.3"/><path d="M1386 146.8 L1395 155.8 L1385.8 165 L1376.8 156 Z" fill="#fafafa" stroke="#a23bb7" stroke-width="1.3"/><path d="M1376.8 156 L1381.4 151.4 L1390.4 160.4 L1385.8 165 Z" fill="#d798e0" stroke="#a23bb7" stroke-width="1.3"/><path d="M1439.4 153.6 L1442.7 157.4 L1446 153.6" fill="none" stroke="#444" stroke-width="1.3"/><path d="M1499.5 109.8 H1509.2 L1499.5 123.4 H1509.8" fill="none" stroke="#333" stroke-width="1.3"/><path d="M1514 99.8 H1533.2 V102.4 L1525.2 110.4 V118.4 H1521.7 V110.4 L1514 102.4 Z" fill="#fafafa" stroke="#333" stroke-width="1.3"/><circle cx="1575.3" cy="103.5" r="12.4" fill="#fafafa" stroke="#333" stroke-width="1.35"/><path d="M1566.5 112.5 L1552.6 126.4" stroke="#333" stroke-width="1.35" stroke-linecap="butt" fill="none"/><path d="M1530 157.6 L1533.5 161.2 L1537 157.6" fill="none" stroke="#444" stroke-width="1.3"/><path d="M1589.5 157.6 L1593.0 161.2 L1596.5 157.6" fill="none" stroke="#444" stroke-width="1.3"/><rect x="1629.7" y="88.7" width="38.6" height="38.4" fill="#efefef" stroke="#a0a0a0" stroke-width="1.4"/><rect x="1630.4" y="89.4" width="37.2" height="5.6" fill="#c9c9c9"/><path d="M1630 105.6 H1668 M1630 115.8 H1668 M1642.2 116 V127 M1655.7 116 V127" stroke="#c2c2c2" stroke-width="1.3"/><circle cx="1647.6" cy="105" r="12" fill="#efefef" stroke="#a0a0a0" stroke-width="1.5"/><rect x="1641" y="102" width="4" height="8" fill="#d0d0d0" stroke="#a0a0a0" stroke-width="0.8"/><rect x="1645.5" y="97.5" width="4" height="12.5" fill="#d0d0d0" stroke="#a0a0a0" stroke-width="0.8"/><rect x="1650" y="100.5" width="4" height="9.5" fill="#d0d0d0" stroke="#a0a0a0" stroke-width="0.8"/><path d="M1656.4 114.4 L1668.2 126.8" stroke="#a0a0a0" stroke-width="1.5" stroke-linecap="butt" fill="none"/><path d="M1733 90.8 H1719.6 V124.8 H1745.2 V107" fill="#efefef" stroke="#bdbdbd" stroke-width="1.4"/><path d="M1725 106 L1738.5 92.5 L1752 106 L1738.5 119.5 Z" transform="rotate(0)" fill="none" stroke="none"/><path d="M1724.6 105.6 L1732.4 97.8 L1742.4 107.8 L1734.6 115.6 Z" fill="#efefef" stroke="#a0a0a0" stroke-width="1.3"/><path d="M1727.6 105.6 L1732.4 100.8 L1739.6 108 L1734.8 112.8 Z" fill="none" stroke="#a0a0a0" stroke-width="1"/><path d="M1734.8 96 L1740 90.8 L1752 102.8 L1746.8 108 Z" fill="#efefef" stroke="#a0a0a0" stroke-width="1.3"/><path d="M1745 93.5 L1748.5 90 L1752.6 94 L1749 97.6" fill="#efefef" stroke="#a0a0a0" stroke-width="1.3"/><path d="M1736.5 97.6 L1750.2 111.3" stroke="#a0a0a0" stroke-width="1.6"/><path d="M1729 157.6 L1732.25 161.2 L1735.5 157.6" fill="none" stroke="#b0b0b0" stroke-width="1.3"/><rect x="1799.9" y="90.9" width="34.3" height="33.8" fill="none" stroke="#b3b3b3" stroke-width="1.5"/><rect x="1804.4" y="95.3" width="11.3" height="11" fill="none" stroke="#b3b3b3" stroke-width="1.5"/><rect x="1819" y="95.3" width="11.3" height="11" fill="none" stroke="#b3b3b3" stroke-width="1.5"/><rect x="1804.4" y="110.1" width="11.3" height="11" fill="none" stroke="#b3b3b3" stroke-width="1.5"/><rect x="1819" y="110.1" width="11.3" height="11" fill="none" stroke="#b3b3b3" stroke-width="1.5"/></svg>
<div class="t" style="left:14.73px;top:132.5px;font-size:15px;line-height:15px;color:#3b3b3b;transform:scaleX(0.8944);">Paste</div>
<div class="t" style="left:128.23px;top:102.7px;font-size:15px;line-height:15px;color:#222;transform:scaleX(1.0313);">Calibri</div>
<div class="t" style="left:275.48px;top:102.7px;font-size:15px;line-height:15px;color:#222;transform:scaleX(0.9107);">11</div>
<div class="t" style="left:134.6px;top:140px;font-size:17px;line-height:17px;color:#333;font-weight:bold;transform:scaleX(0.85);transform-origin:0 0">B</div>
<svg style="position:absolute;left:160px;top:138px" width="20" height="20" viewBox="160 138 20 20"><path d="M172.4 143 L168.4 154.2" stroke="#333" stroke-width="1.5"/><path d="M169.6 142.9 H174.3 M165.7 154.4 H170.6" stroke="#333" stroke-width="1.3"/></svg>
<div class="t" style="left:608.53px;top:102.7px;font-size:15px;line-height:15px;color:#3b3b3b;transform:scaleX(0.9903);">Wrap Text</div>
<div class="t" style="left:607.39px;top:143px;font-size:15px;line-height:15px;color:#3b3b3b;transform:scaleX(1.0077);">Merge &amp; Center</div>
<div class="t" style="left:765.77px;top:102.7px;font-size:15px;line-height:15px;color:#222;transform:scaleX(0.9671);">General</div>
<div class="t" style="left:963.63px;top:133.4px;font-size:15px;line-height:15px;color:#3b3b3b;transform:scaleX(1.0317);">Conditional</div>
<div class="t" style="left:957.75px;top:153px;font-size:15px;line-height:15px;color:#3b3b3b;transform:scaleX(1.0428);">Formatting</div>
<div class="t" style="left:1049.81px;top:133.4px;font-size:15px;line-height:15px;color:#3b3b3b;transform:scaleX(0.9882);">Format as</div>
<div class="t" style="left:1059.51px;top:153px;font-size:15px;line-height:15px;color:#3b3b3b;transform:scaleX(0.9634);">Table</div>
<div class="t" style="left:1134.25px;top:133.4px;font-size:15px;line-height:15px;color:#3b3b3b;">Cell</div>
<div class="t" style="left:1120.57px;top:153px;font-size:15px;line-height:15px;color:#3b3b3b;transform:scaleX(0.9401);">Styles</div>
<div class="t" style="left:1202.65px;top:133.4px;font-size:15px;line-height:15px;color:#3b3b3b;">Insert</div>
<div class="t" style="left:1251.36px;top:133.4px;font-size:15px;line-height:15px;color:#3b3b3b;transform:scaleX(1.0295);">Delete</div>
<div class="t" style="left:1301.09px;top:133.4px;font-size:15px;line-height:15px;color:#3b3b3b;transform:scaleX(1.0043);">Format</div>
<div class="t" style="left:1400.50px;top:91px;font-size:15px;line-height:15px;color:#3b3b3b;transform:scaleX(0.9877);">AutoSum</div>
<div class="t" style="left:1399.55px;top:119.5px;font-size:15px;line-height:15px;color:#3b3b3b;transform:scaleX(1.0442);">Fill</div>
<div class="t" style="left:1399.79px;top:148.6px;font-size:15px;line-height:15px;color:#3b3b3b;transform:scaleX(0.9511);">Clear</div>
<div class="t" style="left:1493.29px;top:133.4px;font-size:15px;line-height:15px;color:#3b3b3b;transform:scaleX(1.0460);">Sort &amp;</div>
<div class="t" style="left:1490.77px;top:153px;font-size:15px;line-height:15px;color:#3b3b3b;transform:scaleX(1.0290);">Filter</div>
<div class="t" style="left:1547.54px;top:133.4px;font-size:15px;line-height:15px;color:#3b3b3b;transform:scaleX(1.0471);">Find &amp;</div>
<div class="t" style="left:1543.65px;top:153px;font-size:15px;line-height:15px;color:#3b3b3b;transform:scaleX(0.9566);">Select</div>
<div class="t" style="left:1623.00px;top:133.4px;font-size:15px;line-height:15px;color:#a6a6a6;transform:scaleX(0.9782);">Analyze</div>
<div class="t" style="left:1631.76px;top:153px;font-size:15px;line-height:15px;color:#a6a6a6;transform:scaleX(1.0312);">Data</div>
<div class="t" style="left:1699.74px;top:133.4px;font-size:15px;line-height:15px;color:#a6a6a6;transform:scaleX(0.9727);">Sensitivity</div>
<div class="t" style="left:1791.30px;top:133.4px;font-size:15px;line-height:15px;color:#a6a6a6;transform:scaleX(1.0233);">Add-ins</div>
</body></html>
